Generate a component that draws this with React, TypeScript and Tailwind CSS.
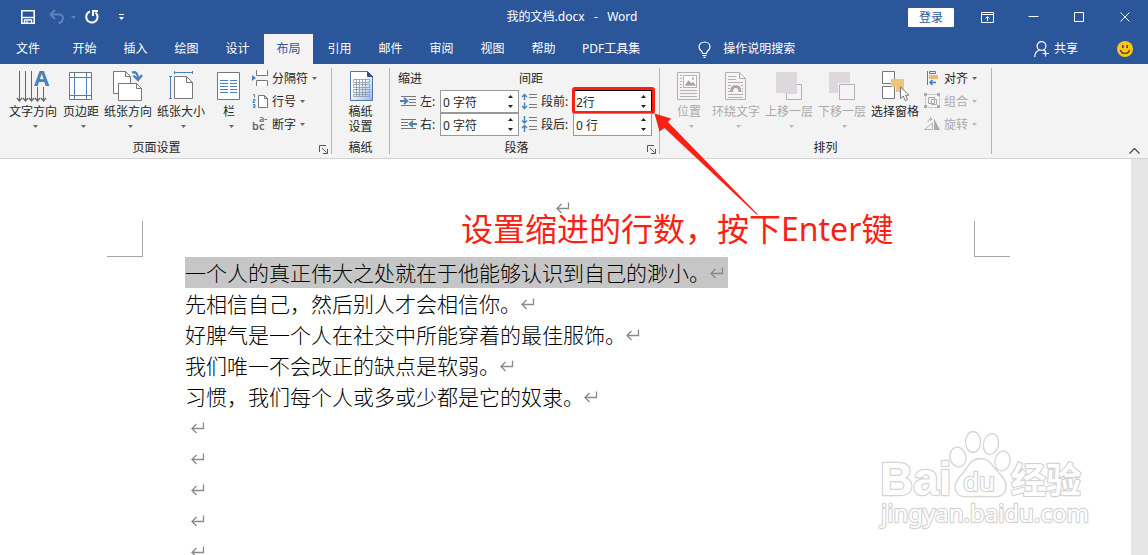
import React from "react";

const ICON = "block h-8 w-8 shrink-0 overflow-visible";
const SMALL = "block h-[17px] w-[17px] shrink-0 overflow-visible";

function Caret({ muted = false }: { muted?: boolean }) {
  return (
    <svg className="block h-[3px] w-[5px] shrink-0" viewBox="0 0 5 3" aria-hidden="true">
      <path d="M0 0h5L2.5 3z" fill={muted ? "#b9b9b9" : "#666"} />
    </svg>
  );
}

function ReturnMark() {
  return (
    <svg className="block h-[14px] w-[14px] shrink-0" viewBox="0 0 14 14" fill="none" stroke="#8a8a8a" strokeWidth="1.3" aria-hidden="true">
      <path d="M12.500 1.500v6H1M5.500 3l-4.500 4.500 4.500 4.500" />
    </svg>
  );
}

function Launcher({ label }: { label: string }) {
  return (
    <button aria-label={label} className="absolute right-[3px] bottom-0 h-[9px] w-[9px]">
      <svg className="block h-[9px] w-[9px]" viewBox="0 0 9 9" fill="none" stroke="#555" aria-hidden="true">
        <path d="M.5 7V.5H7M3 3l4.5 4.5M8.5 4v4.5H4" />
      </svg>
    </button>
  );
}

const icons = {
  textDirection: (
    <svg className={ICON} viewBox="0 0 32 32" aria-hidden="true">
      <g fill="none" stroke="#666">
        <path d="M2.5 1v30M8.5 1v30M14.5 1v30M20.5 17v14M26.5 17v14" />
        <path d="M0 28l2.5 3L5 28M6 28l2.500 3L11 28M12 28l2.500 3L17 28M18 28l2.500 3L23 28M24 28l2.500 3L29 28" strokeWidth="1.4" />
      </g>
      <text x="17" y="16" fontSize="22" fontWeight="700" fill="#4a80ba" fontFamily="Noto Sans">A</text>
    </svg>
  ),
  margins: (
    <svg className={ICON} viewBox="0 0 32 32" fill="none" aria-hidden="true">
      <path d="M4.500 2.500h22v27h-22z" fill="#fff" stroke="#777" />
      <path d="M9.500 3v26M21.500 3v26M5 7.500h21M5 25.500h21" stroke="#4a80ba" />
    </svg>
  ),
  orientation: (
    <svg className={ICON} viewBox="0 0 32 32" fill="none" aria-hidden="true">
      <path d="M1.500 1.500h12l5 5v17h-17z" fill="#fff" stroke="#777" />
      <path d="M13.500 1.500v5h5" stroke="#777" />
      <path d="M6.500 13.500h18l5 5v12h-23z" fill="#fff" stroke="#777" />
      <path d="M24.500 13.500v5h5" stroke="#777" />
      <path d="M20 2.500c4-1 6 1 6 6.500M21.500 5.500l4.500 4.500 4-5" stroke="#4a80ba" strokeWidth="2.300" />
    </svg>
  ),
  size: (
    <svg className={ICON} viewBox="0 0 32 32" fill="none" aria-hidden="true">
      <path d="M9.500 6.500h12l6 6v16h-18z" fill="#fff" stroke="#777" />
      <path d="M21.500 6.500v6h6" stroke="#777" />
      <path d="M9.500 2.500h18M9.500 1v3M27.500 1v3M5.500 6.500v22M4 6.500h3M4 28.500h3" stroke="#4a80ba" />
    </svg>
  ),
  columns: (
    <svg className={ICON} viewBox="0 0 32 32" fill="none" aria-hidden="true">
      <path d="M4.500 2.500h22v27h-22z" fill="#fff" stroke="#777" />
      <path d="M7 10.500h8M17 10.500h7M7 13.500h8M17 13.500h7M7 16.500h8M17 16.500h7M7 19.500h8M17 19.500h7M7 22.500h8M17 22.500h7" stroke="#4a80ba" />
    </svg>
  ),
  manuscript: (
    <svg className={ICON} viewBox="0 0 32 32" fill="none" aria-hidden="true">
      <defs>
        <linearGradient id="sheet" x1="0" y1="0" x2="1" y2="1">
          <stop offset="0.4" stopColor="#fff" />
          <stop offset="1" stopColor="#8fb4ea" />
        </linearGradient>
      </defs>
      <path d="M5.500 1.500h17l5 5v24h-22z" fill="url(#sheet)" stroke="#5374a8" />
      <path d="M22.500 1.500v5h5z" fill="#31538c" stroke="#31538c" />
      <path d="M8.500 9.500h16v3h-16zM8.500 14.500h16v3h-16zM8.500 19.500h16v3h-16zM8.500 24.500h16v2h-16zM11.500 9v17M14.500 9v17M17.500 9v17M20.500 9v17" stroke="#8d96a6" strokeWidth=".8" />
    </svg>
  ),
  position: (
    <svg className={ICON} viewBox="0 0 32 32" fill="none" aria-hidden="true">
      <path d="M4.500 2.500h22v27h-22z" fill="#f6f2f6" stroke="#b3b1b3" />
      <path d="M7 5.500h2M7 8.500h2M7 11.500h2M7 14.500h2M7 17.500h2M7 20.500h17M7 23.500h17M7 26.500h17" stroke="#b3b1b3" />
      <path d="M10.500 5.500h13v12h-13z" fill="#fff" stroke="#b3b1b3" />
      <path d="M12 15.500l3.500-5 3 3 1.500-1.500 2.500 3.500z" fill="#a8a6a8" stroke="#a8a6a8" strokeWidth=".6" />
      <circle cx="20" cy="8.500" r="1.200" fill="#b3b1b3" />
    </svg>
  ),
  wrap: (
    <svg className={ICON} viewBox="0 0 32 32" fill="none" aria-hidden="true">
      <path d="M5.500 2.500h14l6 6v21h-20z" fill="#f6f2f6" stroke="#b3b1b3" />
      <path d="M19.500 2.500v6h6M8 6.500h8M8 9.500h8M8 12.500h15M8 15.500h3M8 18.500h2M8 21.500h2M21 15.500h2M22 18.500h1M22 21.500h1M8 24.500h15M8 27.500h15" stroke="#b3b1b3" />
      <path d="M11.500 22c0-3.500 1.500-5.500 4.200-5.500s4.300 2 4.300 5.500" stroke="#aaa8aa" strokeWidth="3" />
    </svg>
  ),
  forward: (
    <svg className={ICON} viewBox="0 0 32 32" fill="none" aria-hidden="true">
      <path d="M13.500 14.500h15v15h-15z" fill="#f6f2f6" stroke="#b3b1b3" />
      <path d="M3 2h21v22H12v-1H3z" fill="#dcd8dc" />
    </svg>
  ),
  backward: (
    <svg className={ICON} viewBox="0 0 32 32" fill="none" aria-hidden="true">
      <path d="M3 2h21v21H3z" fill="#dcd8dc" />
      <path d="M12 13h18v18H12z" fill="#f3f3f3" />
      <path d="M13.500 14.500h15v15h-15z" fill="#f6f2f6" stroke="#b3b1b3" />
    </svg>
  ),
  selection: (
    <svg className={ICON} viewBox="0 0 32 32" fill="none" aria-hidden="true">
      <path d="M3.500 1.500h12v12h-12zM3.500 16.500h12v12h-12z" fill="#fff" stroke="#777" />
      <path d="M12 9h13v13h-8v-5h-5z" fill="#ecc67d" />
      <path d="M21.500 17v11.500l2.700-2.500 2 4.500 2.300-1-2-4.300h3.500z" fill="#fff" stroke="#777" />
    </svg>
  ),
  breaks: (
    <svg className={SMALL} viewBox="0 0 17 17" fill="none" aria-hidden="true">
      <path d="M4.500 0v5.500h11V0M4.500 16v-5.500h11V16" fill="#fff" stroke="#777" />
      <path d="M0 5l4 3-4 3z" fill="#4a80ba" />
    </svg>
  ),
  lineNumbers: (
    <svg className={SMALL} viewBox="0 0 17 17" fill="none" aria-hidden="true">
      <path d="M6.500 2.500h6l3 3v9h-9z" fill="#fff" stroke="#777" />
      <path d="M12.500 2.500v3h3" stroke="#777" />
      <path d="M1 1.500h1.500v3M1 6.500h2v1.500H1V9.500h2M1 11.500h2v3H1M1 13h2" stroke="#4a80ba" />
    </svg>
  ),
  hyphen: (
    <svg className={SMALL} viewBox="0 0 17 17" aria-hidden="true">
      <text x="0" y="14" fontSize="11" fill="#666" fontFamily="Noto Sans" fontWeight="600">
        bc
        <tspan x="7" y="6" fontSize="9">a-</tspan>
      </text>
    </svg>
  ),
  indentLeft: (
    <svg className={SMALL} viewBox="0 0 17 17" fill="none" aria-hidden="true">
      <path d="M1 3.500h15M9 6.500h7M9 9.500h7M1 12.500h15" stroke="#777" />
      <path d="M0 8h6M4 5l3.500 3L4 11" stroke="#4a80ba" strokeWidth="1.800" />
    </svg>
  ),
  indentRight: (
    <svg className={SMALL} viewBox="0 0 17 17" fill="none" aria-hidden="true">
      <path d="M1 3.500h15M1 6.500h7M1 9.500h7M1 12.500h15" stroke="#777" />
      <path d="M17 8h-6M13 5L9.500 8l3.500 3" stroke="#4a80ba" strokeWidth="1.800" />
    </svg>
  ),
  before: (
    <svg className={SMALL} viewBox="0 0 17 17" fill="none" aria-hidden="true">
      <path d="M8 1.500h8M8 4.500h8M8 11.500h8M8 14.500h8" stroke="#777" />
      <path d="M3.500 7V2M1 4l2.500-2.500L6 4M3.500 9.500v6M1 13l2.500 2.500L6 13" stroke="#4a80ba" strokeWidth="1.400" />
    </svg>
  ),
  after: (
    <svg className={SMALL} viewBox="0 0 17 17" fill="none" aria-hidden="true">
      <path d="M8 1.500h8M8 4.500h8M8 10.500h8M8 13.500h8" stroke="#777" />
      <path d="M3.500 0v7M1 4.500L3.500 7 6 4.500M3.500 16V9.500M1 12l2.500-2.500L6 12" stroke="#4a80ba" strokeWidth="1.400" />
    </svg>
  ),
  align: (
    <svg className={SMALL} viewBox="0 0 17 17" fill="none" aria-hidden="true">
      <path d="M3.500 1v14M5.500 1.500h6v2h-6z" stroke="#777" />
      <path d="M5 5h9v4H5z" fill="#ecb873" />
      <path d="M12 12.500H6M8.500 10L6 12.500 8.500 15" stroke="#3c78bd" strokeWidth="1.500" />
    </svg>
  ),
  group: (
    <svg className={SMALL} viewBox="0 0 17 17" fill="none" aria-hidden="true">
      <path d="M1.500 1.500h14v13h-14z" stroke="#b9b9b9" strokeDasharray="2 1" />
      <path d="M4.500 4.500h6v6h-6zM7.500 6.500h5v5h-5z" stroke="#aaa" />
      <path d="M0 0h3v3H0zM13 0h3v3h-3zM0 12h3v3H0zM13 12h3v3h-3z" fill="#aaa" />
    </svg>
  ),
  rotate: (
    <svg className={SMALL} viewBox="0 0 17 17" fill="none" aria-hidden="true">
      <path d="M8.500 7v6.500h-8z" stroke="#b3b3b3" />
      <path d="M10 2.500l6 11.500h-6z" fill="#aaa" />
      <path d="M4 6c0-2 1-3 4-3M6 1l2 2-2 2" stroke="#aaa" />
    </svg>
  ),
};

type BigProps = { icon: React.ReactNode; label: string; width: string; caret?: boolean; disabled?: boolean };

function BigButton({ icon, label, width, caret = true, disabled = false }: BigProps) {
  return (
    <button disabled={disabled} className={`flex shrink-0 flex-col items-center ${width} ${disabled ? "text-[#aaa]" : "text-[#262626]"}`}>
      {icon}
      <span className="leading-5 whitespace-nowrap">{label}</span>
      {caret && (
        <span className="flex h-2 items-center pl-1">
          <Caret muted={disabled} />
        </span>
      )}
    </button>
  );
}

function SmallButton({ icon, label, disabled = false }: { icon: React.ReactNode; label: string; disabled?: boolean }) {
  return (
    <button disabled={disabled} className={`flex h-[23px] items-center gap-[3px] leading-5 whitespace-nowrap ${disabled ? "text-[#aaa]" : "text-[#262626]"}`}>
      {icon}
      <span>{label}</span>
      <span className="pl-px">
        <Caret muted={disabled} />
      </span>
    </button>
  );
}

type GroupProps = { title: string; launcher?: boolean; className: string; titleClass?: string; children: React.ReactNode };

function Group({ title, launcher = false, className, titleClass = "", children }: GroupProps) {
  return (
    <section aria-label={title} className={`relative my-1 flex shrink-0 flex-col justify-between border-r border-[#b4b4b4] ${className}`}>
      <div className="flex pt-0.5">{children}</div>
      <h2 className={`text-center leading-3 ${titleClass}`}>{title}</h2>
      {launcher && <Launcher label={`${title}选项`} />}
    </section>
  );
}

type SpinProps = { id: string; icon: React.ReactNode; label: string; value: string; active?: boolean };

function SpinField({ id, icon, label, value, active = false }: SpinProps) {
  return (
    <div className="relative flex h-[23px] items-center">
      {icon}
      <label htmlFor={id} className="grow pl-[3px] leading-5 whitespace-nowrap">
        {label}
      </label>
      <div className={`flex h-[23px] w-[79px] items-center border bg-white ${active ? "border-black" : "border-[#999]"}`}>
        <input id={id} defaultValue={value} className="h-5 w-0 grow bg-transparent pl-0.5 outline-none" />
        <div className="flex w-4 flex-col items-center gap-1">
          <button aria-label={`${label} 增加`} className="flex h-1.5 w-4 items-center justify-center">
            <svg className="block h-[3px] w-[5px]" viewBox="0 0 5 3" aria-hidden="true"><path d="M0 3h5L2.500 0z" fill="#222" /></svg>
          </button>
          <button aria-label={`${label} 减少`} className="flex h-1.5 w-4 items-center justify-center">
            <svg className="block h-[3px] w-[5px]" viewBox="0 0 5 3" aria-hidden="true"><path d="M0 0h5L2.500 3z" fill="#222" /></svg>
          </button>
        </div>
      </div>
      {active && <span className="pointer-events-none absolute -top-[3px] -right-[3px] h-[27px] w-[83px] rounded-[3px] border-[3px] border-[#fc1f14]" />}
    </div>
  );
}

const tabs = ["开始", "插入", "绘图", "设计", "布局", "引用", "邮件", "审阅", "视图", "帮助"];

const paragraphs = [
  "一个人的真正伟大之处就在于他能够认识到自己的渺小。",
  "先相信自己，然后别人才会相信你。",
  "好脾气是一个人在社交中所能穿着的最佳服饰。",
  "我们唯一不会改正的缺点是软弱。",
  "习惯，我们每个人或多或少都是它的奴隶。",
];

function TitleBar() {
  return (
    <div className="grid h-[34px] grid-cols-[1fr_auto_1fr] items-center">
      <div className="flex items-center pl-[21px]">
        <button aria-label="保存">
          <svg className="block h-[14px] w-[14px]" viewBox="0 0 14 14" fill="none" stroke="#fff" aria-hidden="true">
            <path d="M.8.800h12.400v12.400H.8z" strokeWidth="1.600" />
            <path d="M1 7.500h12" strokeWidth="1.400" />
            <path d="M3.500 13v-3h7v3M6 13v-2" strokeWidth="1.300" />
          </svg>
        </button>
        <button aria-label="撤消" className="ml-[14px] flex items-center gap-1.5">
          <svg className="block h-4 w-4" viewBox="0 0 16 16" fill="none" stroke="#5f82b8" strokeWidth="2" aria-hidden="true">
            <path d="M1.500 5.500H10c5 0 5.500 7-.500 9M6 1L1.500 5.500 6 10" />
          </svg>
          <svg className="block h-[3px] w-[5px]" viewBox="0 0 5 3" aria-hidden="true"><path d="M0 0h5L2.500 3z" fill="#5f82b8" /></svg>
        </button>
        <button aria-label="重复" className="ml-2">
          <svg className="block h-4 w-4" viewBox="0 0 16 16" fill="none" stroke="#fff" strokeWidth="2" aria-hidden="true">
            <path d="M6 2.500A5.700 5.700 0 1 0 11.500 3.500M9 7V2M8 2h6" />
          </svg>
        </button>
        <button aria-label="自定义快速访问工具栏" className="ml-[18px]">
          <svg className="block h-2 w-[7px]" viewBox="0 0 7 8" fill="#fff" aria-hidden="true"><path d="M1 1h5v1H1zM1 4h5L3.500 7z" /></svg>
        </button>
      </div>
      <h1 className="pr-1 leading-5 whitespace-pre">{"我的文档.docx   -   Word"}</h1>
      <div className="flex items-center justify-end">
        <button className="mr-2.5 h-[19px] w-[46px] rounded-[1px] bg-white leading-[19px] text-[#2b579a]">登录</button>
        <button aria-label="功能区显示选项" className="flex w-[46px] justify-center">
          <svg className="block h-[11px] w-[13px]" viewBox="0 0 13 11" fill="none" stroke="#fff" aria-hidden="true">
            <path d="M.5.500h12v10H.5zM.5 2.500h12M6.500 9V4.500M4.500 6.500l2-2 2 2" />
          </svg>
        </button>
        <button aria-label="最小化" className="flex w-[46px] justify-center">
          <svg className="block h-[11px] w-[11px]" viewBox="0 0 11 11" stroke="#fff" aria-hidden="true"><path d="M.5 4.500h10" /></svg>
        </button>
        <button aria-label="最大化" className="flex w-[46px] justify-center">
          <svg className="block h-[11px] w-[11px]" viewBox="0 0 11 11" fill="none" stroke="#fff" aria-hidden="true"><path d="M.5.500h9v9h-9z" /></svg>
        </button>
        <button aria-label="关闭" className="flex w-[46px] justify-center">
          <svg className="block h-[11px] w-[11px]" viewBox="0 0 11 11" fill="none" stroke="#fff" aria-hidden="true"><path d="M.5.500l9 9M9.500.500l-9 9" /></svg>
        </button>
      </div>
    </div>
  );
}

function TabRow() {
  return (
    <nav className="flex h-[30px] items-stretch leading-[28px] whitespace-nowrap">
      <button className="mr-1 w-14">文件</button>
      <div className="flex gap-0.5">
        {tabs.map((tab) => (
          <button key={tab} className={`w-[49px] ${tab === "布局" ? "bg-[#f3f3f3] text-[#2b579a]" : ""}`}>
            {tab}
          </button>
        ))}
        <button className="px-3">PDF工具集</button>
      </div>
      <button className="ml-[46px] flex items-center gap-3">
        <svg className="block h-[17px] w-[13px]" viewBox="0 0 13 17" fill="none" stroke="#fff" strokeWidth="1.200" aria-hidden="true">
          <path d="M4.500 12.500c0-3-3.500-3-3.500-6.500C1 3 3.500 1 6.500 1S12 3 12 6c0 3.500-3.500 3.500-3.500 6.500zM4.500 14.500h4M5.500 16.400h2" />
        </svg>
        <span className="leading-[28px]">操作说明搜索</span>
      </button>
      <div className="ml-auto flex items-center pr-[15px]">
        <button className="flex items-center gap-1">
          <svg className="block h-4 w-4" viewBox="0 0 16 16" fill="none" stroke="#fff" strokeWidth="1.200" aria-hidden="true">
            <circle cx="7.500" cy="5" r="4.400" />
            <path d="M.7 16c0-4 2-6 4.800-7M9.500 9l1.500 1M11.500 9.500v6M8.500 12.500h6.500" />
          </svg>
          <span className="leading-[28px]">共享</span>
        </button>
        <button aria-label="反馈" className="ml-[39px]">
          <svg className="block h-4 w-4" viewBox="0 0 16 16" aria-hidden="true">
            <circle cx="8" cy="8" r="8" fill="#fcc419" />
            <path d="M5 4h1.600v3H5zM9.400 4H11v3H9.400z" fill="#4b4533" />
            <path d="M3.500 9c1 4.500 8 4.500 9 0" fill="none" stroke="#4b4533" strokeWidth="1.300" />
          </svg>
        </button>
      </div>
    </nav>
  );
}

function Ribbon() {
  return (
    <div className="relative flex h-[95px] border-b border-[#d2d2d2] bg-[#f3f3f3] text-[#262626]">
      <Group title="页面设置" launcher className="w-[332px] pl-1.5" titleClass="pr-6">
        <BigButton icon={icons.textDirection} label="文字方向" width="w-[54px]" />
        <BigButton icon={icons.margins} label="页边距" width="w-[42px]" />
        <BigButton icon={icons.orientation} label="纸张方向" width="w-[52px]" />
        <BigButton icon={icons.size} label="纸张大小" width="w-[54px]" />
        <BigButton icon={icons.columns} label="栏" width="w-[42px]" />
        <div className="-mt-[3px] pl-0.5">
          <SmallButton icon={icons.breaks} label="分隔符" />
          <SmallButton icon={icons.lineNumbers} label="行号" />
          <SmallButton icon={icons.hyphen} label="断字" />
        </div>
      </Group>
      <Group title="稿纸" className="w-[58px]">
        <button className="flex grow flex-col items-center">
          {icons.manuscript}
          <span className="pt-0.5 leading-[15px]">稿纸<br />设置</span>
        </button>
      </Group>
      <Group title="段落" launcher className="w-[270px]" titleClass="pr-4">
        <div className="flex pl-2">
          <fieldset className="w-[121px]">
            <legend className="pb-0.5 leading-[18px]">缩进</legend>
            <div className="pl-0.5">
              <SpinField id="indent-left" icon={icons.indentLeft} label="左:" value="0 字符" />
              <SpinField id="indent-right" icon={icons.indentRight} label="右:" value="0 字符" />
            </div>
          </fieldset>
          <fieldset className="w-[133px]">
            <legend className="pb-0.5 leading-[18px]">间距</legend>
            <div className="pl-0.5">
              <SpinField id="space-before" icon={icons.before} label="段前:" value="2行" active />
              <SpinField id="space-after" icon={icons.after} label="段后:" value="0 行" />
            </div>
          </fieldset>
        </div>
      </Group>
      <Group title="排列" className="w-[332px]">
        <div className="flex pl-2">
          <BigButton icon={icons.position} label="位置" width="w-[42px]" disabled />
          <BigButton icon={icons.wrap} label="环绕文字" width="w-[52px]" disabled />
          <BigButton icon={icons.forward} label="上移一层" width="w-[54px]" disabled />
          <BigButton icon={icons.backward} label="下移一层" width="w-[52px]" disabled />
          <BigButton icon={icons.selection} label="选择窗格" width="w-[54px]" caret={false} />
        </div>
        <div className="-mt-[3px] pl-0.5">
          <SmallButton icon={icons.align} label="对齐" />
          <SmallButton icon={icons.group} label="组合" disabled />
          <SmallButton icon={icons.rotate} label="旋转" disabled />
        </div>
      </Group>
      <button aria-label="折叠功能区" className="mr-2 mb-1 ml-auto self-end">
        <svg className="block h-1.5 w-[11px]" viewBox="0 0 11 6" fill="none" stroke="#444" strokeWidth="1.200" aria-hidden="true"><path d="M.5 5.500l5-5 5 5" /></svg>
      </button>
    </div>
  );
}

function Watermark() {
  return (
    <svg className="absolute right-10 bottom-6 h-[104px] w-[214px] overflow-visible" viewBox="0 0 214 104" role="img" aria-label="Baidu经验">
      <g fill="#fff" stroke="#d4d4d4" strokeWidth="1.300">
        <ellipse cx="81" cy="30" rx="8" ry="10" transform="rotate(-12 81 30)" />
        <ellipse cx="96" cy="15" rx="7.500" ry="10.500" />
        <ellipse cx="114" cy="17" rx="7.500" ry="10.500" transform="rotate(12 114 17)" />
        <ellipse cx="125.500" cy="34" rx="7.500" ry="10" transform="rotate(12 125.500 34)" />
        <path d="M103.500 31.500c10 0 12 9 19 15 6 6 9 12 5 19-4 6-12 4-24 4s-20 2-24-4c-4-7 0-13 6-19 6-7 8-15 18-15z" />
        <g strokeWidth="2.400" paintOrder="stroke" strokeLinejoin="round">
          <text x="3" y="68" fontSize="46" fontWeight="700" fontFamily="Liberation Sans">Bai</text>
          <text x="86" y="64" fontSize="26" fontFamily="Noto Sans">du</text>
          <text x="134" y="66" fontSize="35" fontWeight="700" fontFamily="Noto Sans CJK SC">经验</text>
          <text x="4" y="95" fontSize="24" fontFamily="Noto Sans">jingyan.baidu.com</text>
        </g>
      </g>
    </svg>
  );
}

export default function App() {
  return (
    <div className="relative flex h-screen min-h-0 flex-col overflow-hidden bg-white font-['Noto_Sans','Noto_Sans_CJK_SC',sans-serif] text-xs text-white">
      <header className="shrink-0 bg-[#2b579a]">
        <TitleBar />
        <TabRow />
        <Ribbon />
      </header>
      <div className="flex min-h-0 grow">
        <main className="relative min-w-0 grow overflow-hidden text-black">
          <div className="flex justify-between pt-[42px] pr-[121px] pl-[107px]">
            <span className="mt-5 h-9 w-9 border-r border-b border-[#a6a6a6]" />
            <span className="pl-2">
              <ReturnMark />
            </span>
            <span className="mt-5 h-9 w-9 border-b border-l border-[#a6a6a6]" />
          </div>
          <article className="pl-[185px] font-['Noto_Sans_CJK_SC',sans-serif] text-[21px] leading-[31px] font-light whitespace-nowrap">
            {paragraphs.map((line, index) => (
              <p key={line} className={`flex w-max items-center pr-1 ${index === 0 ? "bg-[#c6c6c6]" : ""}`}>
                {line}
                <ReturnMark />
              </p>
            ))}
            {[0, 1, 2, 3, 4].map((row) => (
              <p key={row} className="flex h-[31px] items-center pl-1.5">
                <ReturnMark />
              </p>
            ))}
          </article>
          <Watermark />
        </main>
        <div className="w-[17px] shrink-0 bg-[#e6e6e6]" />
      </div>
      <p className="absolute top-[209px] left-[461px] text-[32px] leading-10 whitespace-nowrap text-[#fc1f14]">设置缩进的行数，按下Enter键</p>
      <svg className="pointer-events-none absolute top-[112px] left-[652px] h-[104px] w-[108px]" viewBox="0 0 108 104" aria-hidden="true">
        <path d="M2.500 1.500L19 6.500l-3 3.500L106 102.500h-1.500L12.500 16 7.500 19.500z" fill="#fc1f14" />
      </svg>
    </div>
  );
}
